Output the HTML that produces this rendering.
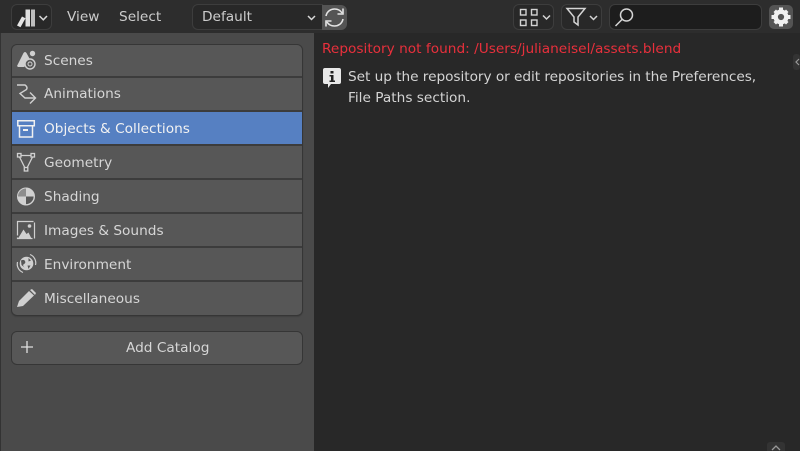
<!DOCTYPE html>
<html><head><meta charset="utf-8"><style>
html,body{margin:0;padding:0;width:800px;height:451px;overflow:hidden;background:#282828}
body{position:relative;font-family:"DejaVu Sans","Liberation Sans",sans-serif;font-size:13.7px;color:#cccccc}
#w{left:0;top:0;width:800px;height:451px;filter:blur(.3px);overflow:hidden;background:#282828}
div,svg,span{position:absolute;box-sizing:border-box}
.t{white-space:nowrap;line-height:18px}
.hdr{left:0;top:0;width:800px;height:33px;background:#2d2d2d}
.side{left:1px;top:33px;width:313px;height:418px;background:#4a4a4a}
.btn{border:1px solid #3d3d3d;background:#282828;border-radius:6px;height:26px;top:4px}
.list{left:11px;top:44px;width:292px;height:272px;background:#575757;border:1px solid #363636;border-radius:6px;overflow:hidden;box-shadow:0 1px 1px #404040}
.row{left:0;width:290px;height:34px;border-bottom:2px solid #3c3c3c}
.row .t{left:32px;top:8px;color:#d6d6d6}
.row svg{left:3px;top:5px}
</style></head><body><div id="w">
<div class="hdr"></div>
<div class="side"></div>
<div style="left:0;top:33px;width:1px;height:418px;background:#333"></div>

<div class="btn" style="left:11px;width:41px"></div>
<svg style="left:15px;top:7px" width="36" height="22" viewBox="0 0 36 22">
<path d="M2 18.500L7 9.500l3.500 1.800-5 9z" fill="#e6e6e6"/><rect x="10.500" y="2.500" width="4.500" height="17" fill="#e0e0e0"/><rect x="16" y="2.500" width="4" height="17" fill="#bdbdbd"/>
<path d="M24.500 9l3.800 3.800L32 9" fill="none" stroke="#d8d8d8" stroke-width="1.500"/></svg>
<div class="t" style="left:67px;top:8px">View</div>
<div class="t" style="left:119px;top:8px">Select</div>

<div class="btn" style="left:192px;width:131px;border-radius:6px 0 0 6px"></div>
<div class="t" style="left:202px;top:8px">Default</div>
<svg style="left:305px;top:13px" width="14" height="10" viewBox="0 0 14 10"><path d="M3 3l3.500 3.500L10 3" fill="none" stroke="#d8d8d8" stroke-width="1.500"/></svg>
<div style="left:322px;top:5px;width:25px;height:25px;background:#545454;border-radius:0 6px 6px 0"></div>
<svg style="left:323px;top:6px" width="23" height="23" viewBox="0 0 23 23" fill="none" stroke="#e4e4e4" stroke-width="1.600">
<path d="M3 10C4 5 8 3 11.500 3c3.500 0 6 1.500 7.500 4"/><path d="M20 2.500V8h-5.500"/>
<path d="M20 13c-1 5-5 7-8.500 7-3.500 0-6-1.500-7.500-4"/><path d="M3 20.500V15h5.500"/></svg>

<div class="btn" style="left:513px;width:41px"></div>
<svg style="left:517px;top:7px" width="36" height="22" viewBox="0 0 36 22" fill="none" stroke="#d4d4d4" stroke-width="1.400">
<rect x="3.500" y="2.500" width="5.500" height="5.500"/><rect x="14.500" y="2.500" width="5.500" height="5.500"/><rect x="3.500" y="13" width="5.500" height="5.500"/><rect x="14.500" y="13" width="5.500" height="5.500"/>
<path d="M26 8.500l3.500 3.500 3.500-3.500" stroke-width="1.500"/></svg>
<div class="btn" style="left:561px;width:41px"></div>
<svg style="left:565px;top:7px" width="36" height="20" viewBox="0 0 36 20" fill="none" stroke="#d4d4d4" stroke-width="1.500">
<path d="M2 1.500h18l-7 8.500v8l-4-3v-5z"/><path d="M25 9l3.500 3.500L32 9"/></svg>
<div class="btn" style="left:609px;width:153px;background:#1d1d1d"></div>
<svg style="left:614px;top:6px" width="22" height="22" viewBox="0 0 22 22" fill="none" stroke="#d4d4d4" stroke-width="1.500">
<circle cx="12.500" cy="9" r="6"/><path d="M8 13.500L1.500 20"/></svg>
<div style="left:769px;top:5px;width:24px;height:24px;background:#545454;border-radius:5px"></div>
<svg style="left:771px;top:7px" width="20" height="20" viewBox="0 0 20 20">
<circle cx="10" cy="10" r="5.300" fill="none" stroke="#f0f0f0" stroke-width="4.400"/>
<path d="M8 .5h4v4H8zM8 15.500h4v4H8zM.5 8h4v4h-4zM15.500 8h4v4h-4zM2.500 5L5 2.500l2.500 2.500L5 7.500zM15 2.500L17.500 5 15 7.500 12.500 5zM2.500 15L5 12.500 7.500 15 5 17.500zM17.500 15L15 17.500 12.500 15 15 12.500z" fill="#f0f0f0"/></svg>

<div class="list">
<div class="row" style="top:0;height:33px">
<svg width="24" height="24" viewBox="0 0 24 24"><path d="M2 16L8.500 3q1.500-2 3 0l3 5.500q-4.500 2-5 8.500H3z" fill="#d0d0d0"/><circle cx="17.500" cy="3.500" r="2.700" fill="#d0d0d0"/><circle cx="15" cy="14" r="5" fill="none" stroke="#d0d0d0" stroke-width="1.400"/><circle cx="15" cy="14" r="2" fill="none" stroke="#d0d0d0"/></svg>
<div class="t" style="top:7px">Scenes</div></div>
<div class="row" style="top:33px">
<svg width="24" height="24" viewBox="0 0 24 24" fill="none" stroke="#d0d0d0" stroke-width="1.400"><path d="M2 2h8q3 2 1.500 4.500L5 10.500 10 15h10"/><path d="M15 9.500l5.500 5.500L15 20.500"/></svg>
<div class="t" style="top:7px">Animations</div></div>
<div class="row" style="top:67px;background:#5680c2;border-bottom-color:#3c3c3c">
<svg width="24" height="24" viewBox="0 0 24 24" fill="none" stroke="#f0f0f0" stroke-width="1.500"><path d="M2.800 3.800h16.500v5H2.800z"/><path d="M4.500 9v11h13V9"/><path d="M8 13h5" stroke-width="2"/></svg>
<div class="t" style="color:#f2f2f2">Objects &amp; Collections</div></div>
<div class="row" style="top:101px">
<svg width="24" height="24" viewBox="0 0 24 24" fill="none" stroke="#d0d0d0" stroke-width="1.300"><path d="M6 4.500h10M4.500 6l5.500 11M17.500 6L12 17"/><rect x="2.500" y="2.500" width="3.500" height="3.500"/><rect x="16" y="2.500" width="3.500" height="3.500"/><rect x="9.300" y="16.500" width="3.500" height="3.500"/></svg>
<div class="t">Geometry</div></div>
<div class="row" style="top:135px">
<svg width="24" height="24" viewBox="0 0 24 24"><circle cx="11" cy="11.500" r="8.300" fill="#575757" stroke="#d0d0d0" stroke-width="1.400"/><path d="M11 3.200A8.300 8.300 0 0 1 19.300 11.500H11zM11 11.500v8.300A8.300 8.300 0 0 1 2.700 11.500z" fill="#d0d0d0"/><path d="M11 3.500A8 8 0 0 0 3 11.500h8z" fill="#8d8d8d"/></svg>
<div class="t">Shading</div></div>
<div class="row" style="top:169px">
<svg width="24" height="24" viewBox="0 0 24 24"><rect x="2.500" y="2.500" width="17" height="17" fill="none" stroke="#d0d0d0" stroke-width="1.200" stroke-dasharray="16 2"/><path d="M3 19.500l5.500-9 3 4.500 2-1.500 3 6z" fill="#d0d0d0"/><circle cx="14.500" cy="7" r="1.800" fill="#d0d0d0"/></svg>
<div class="t">Images &amp; Sounds</div></div>
<div class="row" style="top:203px">
<svg width="24" height="24" viewBox="0 0 24 24"><circle cx="11.500" cy="10.500" r="6.800" fill="#d0d0d0"/><path d="M6 7.500q3-1.500 4 .5t-1 3 .5 3.500L6.500 12zM13.500 5l2.500 2.500-2.500 1zM12.500 12.500h3l-2 3.500z" fill="#575757"/><path d="M2.500 9A9 9 0 0 0 8 19.500M20.500 12A9 9 0 0 0 15 1.500" fill="none" stroke="#d0d0d0" stroke-width="1.200"/></svg>
<div class="t">Environment</div></div>
<div class="row" style="top:237px;border-bottom:0">
<svg width="24" height="24" viewBox="0 0 24 24"><path d="M2 20l2-6L14 4l5 4.500L8 19z" fill="#d0d0d0"/><path d="M15 3l2-1 4 4-1 2z" fill="#d0d0d0"/></svg>
<div class="t">Miscellaneous</div></div>
</div>

<div style="left:11px;top:331px;width:292px;height:34px;background:#575757;border:1px solid #363636;border-radius:6px"></div>
<svg style="left:20px;top:340px" width="14" height="14" viewBox="0 0 14 14"><path d="M7 1v12M1 7h12" stroke="#e0e0e0" stroke-width="1.300"/></svg>
<div class="t" style="left:126px;top:339px;color:#d6d6d6">Add Catalog</div>

<div class="t" style="left:322px;top:40px;color:#e8303c">Repository not found: /Users/julianeisel/assets.blend</div>
<svg style="left:322px;top:67px" width="20" height="22" viewBox="0 0 20 22"><path d="M3 1h14q2 0 2 2v12q0 2-2 2H9l-3 4v-4H3q-2 0-2-2V3q0-2 2-2z" fill="#e8e8e8"/><path d="M8.500 4h3v2.500h-3zM7.500 8h4v5.500h1.500V15H7.500v-1.500H9V9.500H7.500z" fill="#222"/></svg>
<div class="t" style="left:348px;top:68px;color:#d4d4d4;letter-spacing:-.05px">Set up the repository or edit repositories in the Preferences,</div>
<div class="t" style="left:348px;top:89px;color:#d4d4d4">File Paths section.</div>

<svg style="left:793px;top:54px" width="7" height="16" viewBox="0 0 7 16"><rect x="0" y="0" width="7" height="16" rx="3" fill="#333"/><path d="M6 5L3 8l3 3" fill="none" stroke="#999" stroke-width="1.200"/></svg>
<svg style="left:767px;top:442px" width="18" height="9" viewBox="0 0 18 9"><rect x="0" y="0" width="18" height="12" rx="3" fill="#333"/><path d="M5 8l4-4 4 4" fill="none" stroke="#999" stroke-width="1.300"/></svg>
</div></body></html>
